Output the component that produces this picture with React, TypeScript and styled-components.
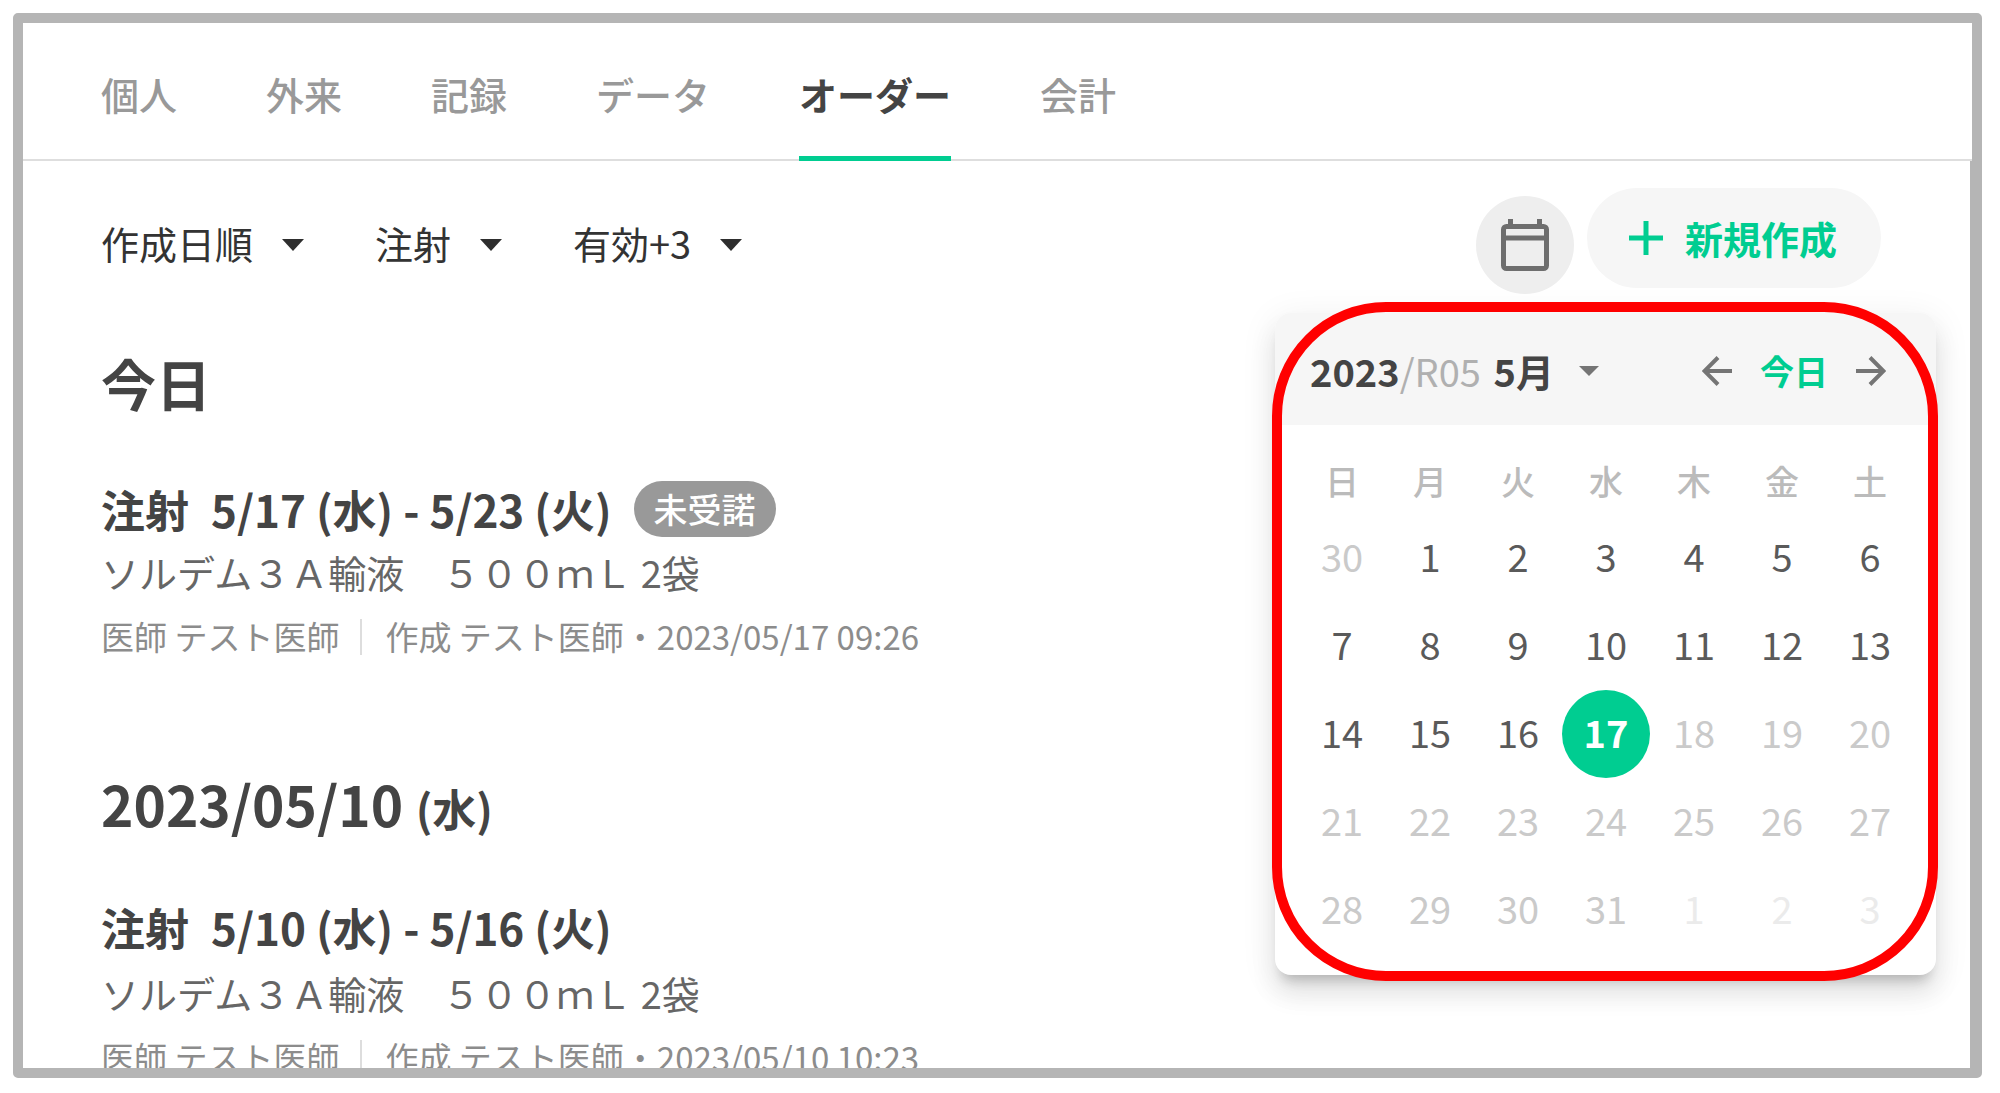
import React from "react";
import styled, { createGlobalStyle } from "styled-components";

const GREEN = "#00cd91";
const INK = "#444444";
const FRAME = "#b5b5b5";

const GlobalStyle = createGlobalStyle`
  *, *::before, *::after { box-sizing: border-box; }
  body {
    margin: 0;
    background: #ffffff;
    color: ${INK};
    font-family: "Noto Sans CJK JP", "Noto Sans", sans-serif;
    font-size: 38px;
    line-height: 56px;
  }
  button, select {
    margin: 0;
    padding: 0;
    border: 0;
    background: none;
    color: inherit;
    font: inherit;
    cursor: pointer;
  }
  h2, h3, p { margin: 0; }
`;

const Page = styled.div`
  display: flex;
  height: 100vh;
  padding: 13px 18px 15px 13px;
`;

const Frame = styled.div`
  display: flex;
  flex: 1;
  flex-direction: column;
  min-width: 0;
  border: 10px solid ${FRAME};
  border-radius: 5px;
  overflow: hidden;
`;

const TabBar = styled.nav`
  display: flex;
  flex: none;
  gap: 89px;
  padding: 43px 78px 0;
  border-bottom: 2px solid #dedede;
`;

const Tab = styled.a<{ $active?: boolean }>`
  margin-bottom: -2px;
  padding-bottom: 34px;
  border-bottom: 5px solid ${(p) => (p.$active ? GREEN : "transparent")};
  color: ${(p) => (p.$active ? INK : "#999999")};
  font-weight: ${(p) => (p.$active ? 700 : 500)};
  text-decoration: none;
`;

const Content = styled.main`
  flex: 1;
  min-height: 0;
  padding: 27px 89px 0 78px;
  border-right: 2px solid ${FRAME};
`;

const Toolbar = styled.div`
  position: relative;
  display: flex;
  align-items: flex-end;
  justify-content: space-between;
  height: 106px;
`;

const Filters = styled.div`
  display: flex;
  align-items: center;
  gap: 71px;
  height: 98px;
`;

const FilterBox = styled.label`
  display: grid;
  align-items: center;
`;

const FilterSelect = styled.select`
  grid-area: 1 / 1;
  height: 60px;
  padding: 0 50px 4px 0;
  appearance: none;
  color: #333333;
`;

const FilterCaret = styled.svg`
  grid-area: 1 / 1;
  justify-self: end;
  width: 22px;
  height: 12px;
  fill: #2e2e2e;
  pointer-events: none;
`;

const Actions = styled.div`
  display: flex;
  align-items: flex-end;
  gap: 13px;
  height: 106px;
`;

const IconButton = styled.button`
  display: grid;
  place-items: center;
  width: 98px;
  height: 98px;
  border-radius: 50%;
  background: #eeeeee;
`;

const CreateButton = styled.button`
  display: flex;
  align-items: center;
  align-self: flex-start;
  gap: 22px;
  height: 100px;
  padding: 0 44px 0 42px;
  border-radius: 50px;
  background: #f6f6f6;
  color: ${GREEN};
  font-weight: 700;
`;

const Popover = styled.section`
  position: absolute;
  top: 125px;
  right: -55px;
  width: 661px;
  padding-bottom: 21px;
  border-radius: 16px;
  background: #ffffff;
  box-shadow:
    0 12px 12px -7px rgba(0, 0, 0, 0.2),
    0 19px 24px 2px rgba(0, 0, 0, 0.08),
    0 7px 34px 5px rgba(0, 0, 0, 0.06);
`;

const Highlight = styled.div`
  position: absolute;
  inset: -11px -2px -6px -3px;
  border: 10px solid #ff0000;
  border-radius: 114px;
  pointer-events: none;
`;

const CalendarHeader = styled.header`
  display: flex;
  align-items: center;
  justify-content: space-between;
  height: 112px;
  padding: 4px 50px 0 35px;
  border-radius: 16px 16px 0 0;
  background: #f6f6f6;
`;

const MonthButton = styled.button`
  display: flex;
  align-items: center;
  gap: 25px;
  font-weight: 700;
`;

const Era = styled.span`
  margin-right: 4px;
  color: #b0b0b0;
  font-weight: 400;
`;

const MonthNav = styled.div`
  display: flex;
  align-items: center;
  gap: 28px;
  color: #757575;
`;

const ArrowButton = styled.button`
  display: flex;
`;

const TodayButton = styled.button`
  color: ${GREEN};
  font-size: 34px;
  font-weight: 700;
`;

const CalendarTable = styled.table`
  width: 616px;
  margin: 24px 0 0 23px;
  border-collapse: collapse;
  table-layout: fixed;

  th, td { padding: 0; }
`;

const Weekday = styled.th`
  && { padding-bottom: 2px; }
  height: 65px;
  color: #bbbbbb;
  font-size: 34px;
  font-weight: 500;
`;

type Tone = "normal" | "selected" | "muted" | "faint";

const dayColor: Record<Tone, string> = {
  normal: "#5a5a5a",
  selected: "#ffffff",
  muted: "#cacaca",
  faint: "#ebebeb",
};

const Day = styled.button<{ $tone: Tone }>`
  display: block;
  width: 88px;
  height: 88px;
  padding-bottom: 4px;
  border-radius: 50%;
  background: ${(p) => (p.$tone === "selected" ? GREEN : "transparent")};
  color: ${(p) => dayColor[p.$tone]};
  font-weight: ${(p) => (p.$tone === "selected" ? 700 : 400)};
`;

const DateGroup = styled.section`
  padding-top: 46px;
  padding-bottom: 47px;
`;

const DateHeading = styled.h2`
  font-size: 55px;
  font-weight: 700;
  line-height: 84px;
`;

const DateWeekday = styled.span`
  font-size: 44px;
  line-height: 1;
`;

const Order = styled.article`
  padding-top: 54px;
`;

const OrderTitle = styled.div<{ $tagged: boolean }>`
  display: flex;
  align-items: ${(p) => (p.$tagged ? "center" : "flex-start")};
  gap: 22px;
  height: 61px;
`;

const OrderName = styled.h3`
  display: flex;
  gap: 22px;
  font-size: 44px;
  font-weight: 700;
  line-height: 56px;
`;

const Tag = styled.span`
  padding: 0 20px;
  border-radius: 28px;
  background: #999999;
  color: #ffffff;
  font-size: 34px;
  font-weight: 500;
`;

const Drug = styled.p`
  color: #666666;
  line-height: 66px;
`;

const Meta = styled.div`
  display: flex;
  align-items: center;
  color: #8c8c8c;
  font-size: 33px;
  line-height: 63px;
`;

const Author = styled.span`
  display: flex;
  align-items: center;

  &::before {
    content: "";
    width: 2px;
    height: 36px;
    margin: 0 23px 0 21px;
    background: #dddddd;
  }
`;

const CalendarIcon = () => (
  <svg width="48" height="52" viewBox="0 0 48 52" fill="none" stroke="#6e6e6e" strokeWidth="5" aria-hidden="true">
    <rect x="2.5" y="7.5" width="43" height="42" rx="3" />
    <path d="M2.5 19h43M9.5 0v8M38.5 0v8" />
  </svg>
);

const PlusIcon = () => (
  <svg width="34" height="34" viewBox="0 0 34 34" fill="none" stroke="currentColor" strokeWidth="5" aria-hidden="true">
    <path d="M17 0v34M0 17h34" />
  </svg>
);

const ArrowIcon = ({ back }: { back?: boolean }) => (
  <svg width="30" height="30" viewBox="0 0 30 30" fill="none" stroke="currentColor" strokeWidth="4" aria-hidden="true">
    <path d={back ? "M30 15H3M16 1.5L2.5 15L16 28.5" : "M0 15h27M14 1.5L27.5 15L14 28.5"} />
  </svg>
);

const tabs = ["個人", "外来", "記録", "データ", "オーダー", "会計"];
const filters = [
  { label: "並び順", value: "作成日順" },
  { label: "種類", value: "注射" },
  { label: "状態", value: "有効+3" },
];
const weekdays = ["日", "月", "火", "水", "木", "金", "土"];
const TODAY = 17;

// Five weeks starting on Sunday, April 30.
const weeks = Array.from({ length: 5 }, (_, w) =>
  Array.from({ length: 7 }, (_, d) => {
    const n = w * 7 + d;
    if (n === 0) return { day: 30, tone: "muted" as Tone };
    if (n > 31) return { day: n - 31, tone: "faint" as Tone };
    if (n === TODAY) return { day: n, tone: "selected" as Tone };
    return { day: n, tone: (n < TODAY ? "normal" : "muted") as Tone };
  })
);

const groups = [
  { date: "今日", period: "5/17 (水) - 5/23 (火)", tag: "未受諾", created: "2023/05/17 09:26" },
  { date: "2023/05/10", weekday: "(水)", period: "5/10 (水) - 5/16 (火)", created: "2023/05/10 10:23" },
];

function CalendarPopover() {
  return (
    <Popover aria-label="カレンダー">
      <CalendarHeader>
        <MonthButton type="button">
          <span>
            2023<Era>/R05</Era> 5月
          </span>
          <svg width="20" height="10" viewBox="0 0 20 10" fill="#757575" aria-hidden="true">
            <path d="M0 0h20L10 10z" />
          </svg>
        </MonthButton>
        <MonthNav>
          <ArrowButton type="button" aria-label="前の月">
            <ArrowIcon back />
          </ArrowButton>
          <TodayButton type="button">今日</TodayButton>
          <ArrowButton type="button" aria-label="次の月">
            <ArrowIcon />
          </ArrowButton>
        </MonthNav>
      </CalendarHeader>
      <CalendarTable>
        <thead>
          <tr>
            {weekdays.map((w) => (
              <Weekday key={w} scope="col">{w}</Weekday>
            ))}
          </tr>
        </thead>
        <tbody>
          {weeks.map((week, i) => (
            <tr key={i}>
              {week.map(({ day, tone }) => (
                <td key={day}>
                  <Day type="button" $tone={tone}>{day}</Day>
                </td>
              ))}
            </tr>
          ))}
        </tbody>
      </CalendarTable>
      <Highlight />
    </Popover>
  );
}

export default function App() {
  return (
    <>
      <GlobalStyle />
      <Page>
        <Frame>
          <TabBar>
            {tabs.map((t) => (
              <Tab key={t} href={`#${t}`} $active={t === "オーダー"}>{t}</Tab>
            ))}
          </TabBar>
          <Content>
            <Toolbar>
              <Filters>
                {filters.map((f) => (
                  <FilterBox key={f.label}>
                    <FilterSelect aria-label={f.label}>
                      <option>{f.value}</option>
                    </FilterSelect>
                    <FilterCaret viewBox="0 0 22 12" aria-hidden="true">
                      <path d="M0 0h22L11 12z" />
                    </FilterCaret>
                  </FilterBox>
                ))}
              </Filters>
              <Actions>
                <IconButton type="button" aria-label="カレンダーを開く">
                  <CalendarIcon />
                </IconButton>
                <CreateButton type="button">
                  <PlusIcon />
                  新規作成
                </CreateButton>
              </Actions>
              <CalendarPopover />
            </Toolbar>
            {groups.map((g) => (
              <DateGroup key={g.date}>
                <DateHeading>
                  {g.date}
                  {g.weekday && <> <DateWeekday>{g.weekday}</DateWeekday></>}
                </DateHeading>
                <Order>
                  <OrderTitle $tagged={Boolean(g.tag)}>
                    <OrderName>
                      <span>注射</span>
                      <span>{g.period}</span>
                    </OrderName>
                    {g.tag && <Tag>{g.tag}</Tag>}
                  </OrderTitle>
                  <Drug>ソルデム３Ａ輸液　５００ｍＬ 2袋</Drug>
                  <Meta>
                    <span>医師 テスト医師</span>
                    <Author>作成 テスト医師・{g.created}</Author>
                  </Meta>
                </Order>
              </DateGroup>
            ))}
          </Content>
        </Frame>
      </Page>
    </>
  );
}
